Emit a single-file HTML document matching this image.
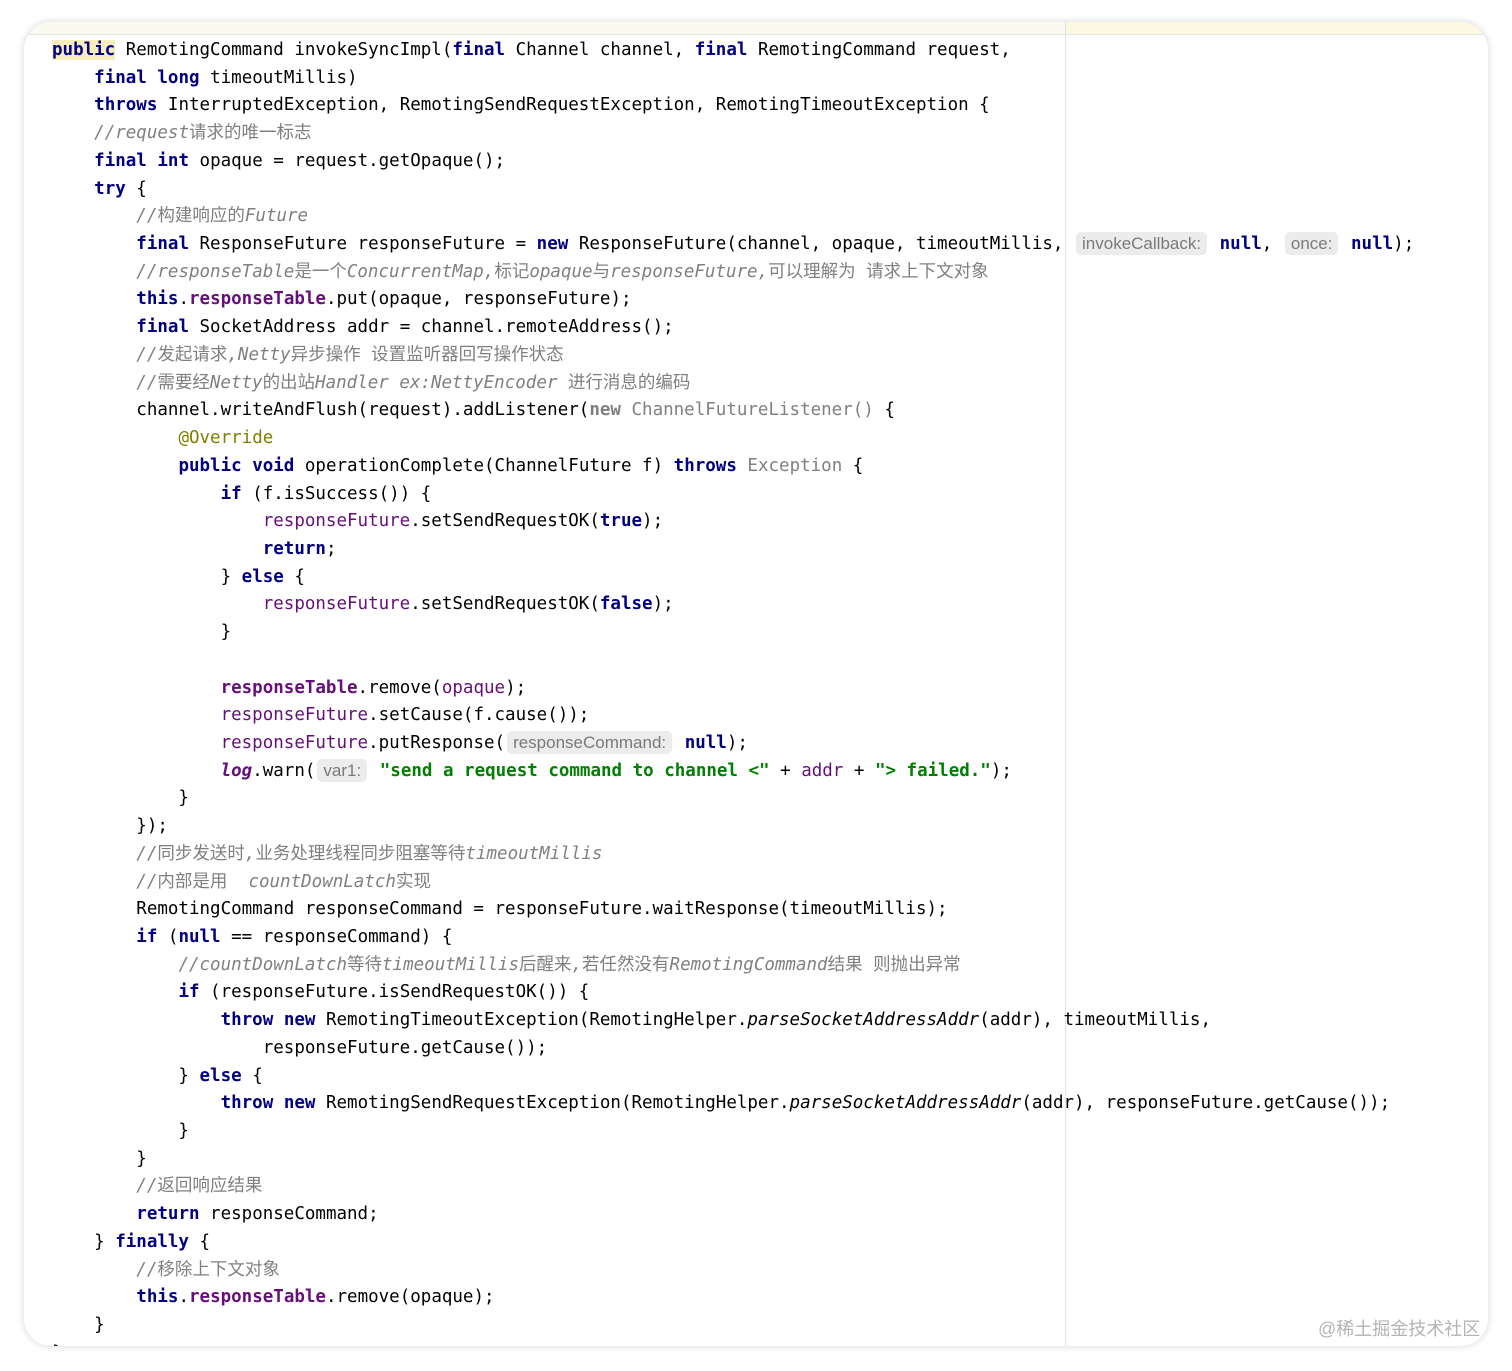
<!DOCTYPE html>
<html><head><meta charset="utf-8"><style>
html,body{margin:0;padding:0;background:#fff;width:1512px;height:1371px;overflow:hidden}
.card{position:absolute;left:24px;top:22px;width:1464px;height:1324px;border-radius:28px;background:#fff;box-shadow:0 0 6px 2px rgba(0,0,0,0.10);overflow:hidden}
.top{position:absolute;left:0;top:0;width:1464px;height:12px;background:#fafaf0;border-bottom:1px solid #e6e6e0}
.top2{position:absolute;left:1042px;top:0;width:422px;height:12px;background:#fbf8e2}
.margin{position:absolute;left:1041px;top:0;width:1px;height:1324px;background:#e3e3e3}
pre{position:absolute;left:28px;top:15px;margin:0;font-family:"DejaVu Sans Mono","Liberation Mono","Noto Sans CJK SC",monospace;font-size:17.5px;line-height:27.72px;color:#000;white-space:pre}
.k{color:#000080;font-weight:bold}
.f{color:#660e7a;font-weight:bold}
.p{color:#660e7a}
.c{color:#808080;font-style:italic}
.c b{font-style:normal;font-weight:normal;line-height:1}
.s{color:#008000;font-weight:bold}
.a{color:#808000}
.g{color:#808080}
.hl{background:#f6ecbc}
.h{font-family:"Liberation Sans",sans-serif;font-size:17px;line-height:1;color:#7a7a7a;background:#ececec;border-radius:5px;padding:2px 6px;margin:0 2px;font-style:normal;font-weight:normal}
.wm{position:absolute;left:1318px;top:1315px;font-family:"Liberation Sans","Noto Sans CJK SC",sans-serif;font-size:18px;color:#b4b4b4}
</style></head><body>
<div class="card"><div class="top"></div><div class="top2"></div><div class="margin"></div>
<pre><span class="k hl">public</span> RemotingCommand invokeSyncImpl(<span class="k">final</span> Channel channel, <span class="k">final</span> RemotingCommand request,
    <span class="k">final</span> <span class="k">long</span> timeoutMillis)
    <span class="k">throws</span> InterruptedException, RemotingSendRequestException, RemotingTimeoutException {
    <span class="c">//request<b>请求的唯一标志</b></span>
    <span class="k">final</span> <span class="k">int</span> opaque = request.getOpaque();
    <span class="k">try</span> {
        <span class="c">//<b>构建响应的</b>Future</span>
        <span class="k">final</span> ResponseFuture responseFuture = <span class="k">new</span> ResponseFuture(channel, opaque, timeoutMillis, <span class="h">invokeCallback:</span> <span class="k">null</span>, <span class="h">once:</span> <span class="k">null</span>);
        <span class="c">//responseTable<b>是一个</b>ConcurrentMap,<b>标记</b>opaque<b>与</b>responseFuture,<b>可以理解为 请求上下文对象</b></span>
        <span class="k">this</span>.<span class="f">responseTable</span>.put(opaque, responseFuture);
        <span class="k">final</span> SocketAddress addr = channel.remoteAddress();
        <span class="c">//<b>发起请求</b>,Netty<b>异步操作 设置监听器回写操作状态</b></span>
        <span class="c">//<b>需要经</b>Netty<b>的出站</b>Handler ex:NettyEncoder <b>进行消息的编码</b></span>
        channel.writeAndFlush(request).addListener(<span class="g" style="font-weight:bold">new</span> <span class="g">ChannelFutureListener()</span> {
            <span class="a">@Override</span>
            <span class="k">public</span> <span class="k">void</span> operationComplete(ChannelFuture f) <span class="k">throws</span> <span class="g">Exception</span> {
                <span class="k">if</span> (f.isSuccess()) {
                    <span class="p">responseFuture</span>.setSendRequestOK(<span class="k">true</span>);
                    <span class="k">return</span>;
                } <span class="k">else</span> {
                    <span class="p">responseFuture</span>.setSendRequestOK(<span class="k">false</span>);
                }

                <span class="f">responseTable</span>.remove(<span class="p">opaque</span>);
                <span class="p">responseFuture</span>.setCause(f.cause());
                <span class="p">responseFuture</span>.putResponse(<span class="h">responseCommand:</span> <span class="k">null</span>);
                <span class="f" style="font-style:italic">log</span>.warn(<span class="h">var1:</span> <span class="s">"send a request command to channel &lt;"</span> + <span class="p">addr</span> + <span class="s">"&gt; failed."</span>);
            }
        });
        <span class="c">//<b>同步发送时</b>,<b>业务处理线程同步阻塞等待</b>timeoutMillis</span>
        <span class="c">//<b>内部是用</b>  countDownLatch<b>实现</b></span>
        RemotingCommand responseCommand = responseFuture.waitResponse(timeoutMillis);
        <span class="k">if</span> (<span class="k">null</span> == responseCommand) {
            <span class="c">//countDownLatch<b>等待</b>timeoutMillis<b>后醒来</b>,<b>若任然没有</b>RemotingCommand<b>结果 则抛出异常</b></span>
            <span class="k">if</span> (responseFuture.isSendRequestOK()) {
                <span class="k">throw</span> <span class="k">new</span> RemotingTimeoutException(RemotingHelper.<i>parseSocketAddressAddr</i>(addr), timeoutMillis,
                    responseFuture.getCause());
            } <span class="k">else</span> {
                <span class="k">throw</span> <span class="k">new</span> RemotingSendRequestException(RemotingHelper.<i>parseSocketAddressAddr</i>(addr), responseFuture.getCause());
            }
        }
        <span class="c">//<b>返回响应结果</b></span>
        <span class="k">return</span> responseCommand;
    } <span class="k">finally</span> {
        <span class="c">//<b>移除上下文对象</b></span>
        <span class="k">this</span>.<span class="f">responseTable</span>.remove(opaque);
    }
}</pre>
</div>
<div class="wm">@稀土掘金技术社区</div>
</body></html>
